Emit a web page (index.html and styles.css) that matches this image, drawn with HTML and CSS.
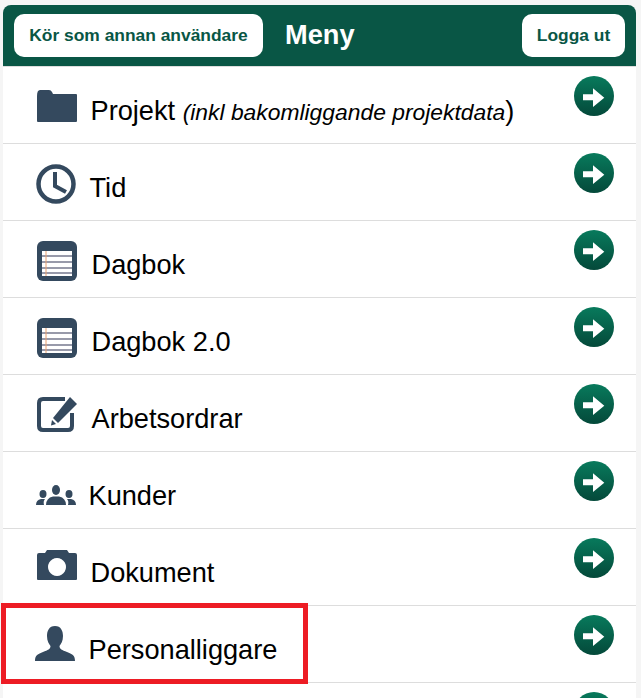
FILE: index.html
```html
<!DOCTYPE html>
<html lang="sv">
<head>
<meta charset="utf-8">
<title>Meny</title>
<link rel="stylesheet" href="styles.css">
</head>
<body>
<div class="page">
  <header class="bar">
    <a class="btn btn-wide">Kör som annan användare</a>
    <h1 class="title">Meny</h1>
    <a class="btn btn-out">Logga ut</a>
  </header>
  <ul class="menu">
    <li class="row">
      <svg class="icon ic-folder" viewBox="0 0 40 32"><path fill="#34495e" d="M0 6Q0 0 3 0H12Q14 0 15 2L16 4H39Q40 4 40 5V31Q40 32 39 32H1Q0 32 0 31Z"/></svg>
      <span class="label">Projekt <em class="note">(inkl bakomliggande projektdata</em><span class="close">)</span></span>
      <svg class="go" viewBox="0 0 40 40"><use href="#arrow"/></svg>
    </li>
    <li class="row">
      <svg class="icon ic-clock" viewBox="0 0 40 40"><circle cx="20" cy="20" r="17.500" fill="none" stroke="#34495e" stroke-width="4.500"/><path fill="none" stroke="#34495e" stroke-width="4" d="M19 8V22L30 28"/></svg>
      <span class="label">Tid</span>
      <svg class="go" viewBox="0 0 40 40"><use href="#arrow"/></svg>
    </li>
    <li class="row">
      <svg class="icon ic-book" viewBox="0 0 40 40"><use href="#book"/></svg>
      <span class="label">Dagbok</span>
      <svg class="go" viewBox="0 0 40 40"><use href="#arrow"/></svg>
    </li>
    <li class="row">
      <svg class="icon ic-book" viewBox="0 0 40 40"><use href="#book"/></svg>
      <span class="label">Dagbok 2.0</span>
      <svg class="go" viewBox="0 0 40 40"><use href="#arrow"/></svg>
    </li>
    <li class="row">
      <svg class="icon ic-edit" viewBox="0 0 40 36"><path fill="none" stroke="#34495e" stroke-width="4" d="M28 3H6Q2 3 2 7V30Q2 34 6 34H31Q35 34 35 30V17"/><path fill="#34495e" d="M33 1L40 8L21 27L16 22Z"/><path fill="#34495e" d="M15 24L19 28L14 29.500Z"/></svg>
      <span class="label">Arbetsordrar</span>
      <svg class="go" viewBox="0 0 40 40"><use href="#arrow"/></svg>
    </li>
    <li class="row">
      <svg class="icon ic-people" viewBox="0 0 40 20"><g fill="#34495e"><ellipse cx="20" cy="5" rx="4" ry="5"/><path d="M10 20Q10 13 17 11.500H23Q30 13 30 20Z"/><ellipse cx="7" cy="9" rx="3.500" ry="4"/><path d="M0 20Q0 15 5 14H9Q7 16 8 20Z"/><ellipse cx="33" cy="9" rx="3.500" ry="4"/><path d="M40 20Q40 15 35 14H31Q33 16 32 20Z"/></g></svg>
      <span class="label">Kunder</span>
      <svg class="go" viewBox="0 0 40 40"><use href="#arrow"/></svg>
    </li>
    <li class="row">
      <svg class="icon ic-camera" viewBox="0 0 40 30"><path fill="#34495e" fill-rule="evenodd" d="M0 5Q0 3 2 3H8L10 0H30L32 3H38Q40 3 40 5V29Q40 30 39 30H1Q0 30 0 29ZM20 8A9 9 0 1 0 20.010 8Z"/></svg>
      <span class="label">Dokument</span>
      <svg class="go" viewBox="0 0 40 40"><use href="#arrow"/></svg>
    </li>
    <li class="row">
      <svg class="icon ic-person" viewBox="0 0 40 35"><path fill="#34495e" d="M20 0C26 0 28 5 28 10C28 15 26 18 24.500 20C24.500 23 27 24 32 26C37 28 40 29 40 35H0C0 29 3 28 8 26C13 24 15.500 23 15.500 20C14 18 12 15 12 10C12 5 14 0 20 0Z"/></svg>
      <span class="label">Personalliggare</span>
      <svg class="go" viewBox="0 0 40 40"><use href="#arrow"/></svg>
    </li>
    <li class="row">
      <svg class="go go-end" viewBox="0 0 40 40"><use href="#arrow"/></svg>
    </li>
  </ul>
  <div class="mark"></div>
</div>
<svg class="defs" width="0" height="0">
  <defs>
    <linearGradient id="grad" x1="0" y1="0" x2="0" y2="1"><stop offset="0" stop-color="#087a5c"/><stop offset="1" stop-color="#04493a"/></linearGradient>
    <symbol id="arrow" viewBox="0 0 40 40"><circle cx="20" cy="20" r="20" fill="url(#grad)"/><path fill="#fff" d="M9 18.300H19V12.300L30.300 21.700L19 31V24.300H9Z"/></symbol>
    <symbol id="book" viewBox="0 0 40 40"><rect width="40" height="40" rx="6" fill="#34495e"/><rect x="5" y="10" width="30" height="25" fill="#fff"/><path stroke="#77798f" stroke-width="1.500" d="M5 15H35M5 21H35M5 27H35M5 32H35"/><path stroke="#e8a070" d="M9 10V35"/></symbol>
  </defs>
</svg>
</body>
</html>
```
FILE: styles.css
```css
html, body { margin: 0; padding: 0; height: 100%; overflow: hidden; background: #f5f5f5; }
body { font-family: "Liberation Sans", Arial, sans-serif; }
.page { position: relative; height: 698px; padding: 5px 5px 0 3px; box-sizing: border-box; overflow: hidden; }
.bar { height: 61px; background: #095645; border-radius: 8px 8px 0 0; display: flex; align-items: flex-start; justify-content: space-between; padding: 9px 11px 0; box-sizing: border-box; }
.btn { height: 43px; line-height: 42px; background: #fff; color: #095645; font-weight: bold; font-size: 17.400px; border-radius: 10px; text-align: center; box-sizing: border-box; }
.btn-wide { width: 249px; }
.btn-out { width: 103px; }
.title { margin: 0; font-size: 27.200px; line-height: 41px; color: #fff; font-weight: bold; flex: 1; padding-left: 22px; }
.menu { list-style: none; margin: 0; padding: 0; background: #fff; }
.row { position: relative; display: flex; align-items: flex-start; height: 77px; box-sizing: border-box; border-top: 1px solid #ddd; padding-left: 33px; }
.icon { display: block; flex: none; }
.label { font-size: 27.200px; line-height: 30px; color: #000; padding-top: 29px; margin-left: -0.500px; }
.note { font-size: 22.850px; }
.go { position: absolute; left: 571px; top: 9px; width: 40px; height: 40px; }
.ic-folder { width: 40px; height: 32px; margin: 23px 14px 0 1px; }
.ic-clock { width: 40px; height: 40px; margin: 20px 14px 0 0; }
.ic-book { width: 40px; height: 40px; margin: 20px 15px 0 1px; }
.ic-edit { width: 40px; height: 36px; margin: 21px 15px 0 1px; }
.ic-people { width: 40px; height: 20px; margin: 33px 13px 0 0; }
.ic-camera { width: 40px; height: 30px; margin: 21px 14px 0 1px; }
.ic-person { width: 40px; height: 35px; margin: 20px 14px 0 -1px; }
.mark { position: absolute; left: 1px; top: 603px; width: 307px; height: 81px; box-sizing: border-box; border: 5px solid #ed1c24; }
.defs { position: absolute; }
```
